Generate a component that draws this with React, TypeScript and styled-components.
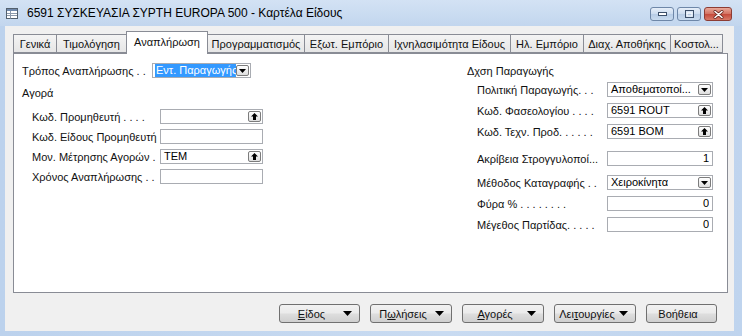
import React from "react";
import styled, { createGlobalStyle } from "styled-components";

const GlobalStyle = createGlobalStyle`
  html, body {
    margin: 0;
    padding: 0;
    background: #ffffff;
  }
  body {
    font-family: "Liberation Sans", Arial, sans-serif;
    font-size: 11px;
    color: #111;
  }
`;

const Window = styled.div`
  width: 742px;
  height: 336px;
  display: flex;
  flex-direction: column;
  background: linear-gradient(to right, #bcd2ed, #c9dbf1 60%, #bfd4ee);
  overflow: hidden;
`;

const TitleBar = styled.div`
  height: 26px;
  display: flex;
  align-items: center;
  padding: 0 10px 0 6px;
  background: linear-gradient(to bottom, #d3e2f4, #c2d6ee);
`;

const TitleText = styled.span`
  margin-left: 9px;
  font-size: 12px;
  color: #000;
  white-space: nowrap;
`;

const Controls = styled.div`
  margin-left: auto;
  display: flex;
  gap: 3px;
  align-self: flex-start;
  margin-top: 7px;
`;

const CtrlBtn = styled.div<{ $close?: boolean }>`
  width: ${(p) => (p.$close ? 28 : 24)}px;
  height: 14px;
  box-sizing: border-box;
  border: 1px solid ${(p) => (p.$close ? "#8d3c33" : "#6e87a8")};
  border-radius: 3px;
  background: ${(p) =>
    p.$close
      ? "linear-gradient(#e9a899, #d27161 50%, #c4493a 51%, #d87a68)"
      : "linear-gradient(#e6eef8, #ccdcef 50%, #b7cce6 51%, #c9dbef)"};
  display: flex;
  align-items: center;
  justify-content: center;
`;

const Client = styled.div`
  flex: 1;
  margin: 0 8px 5px 5px;
  background: #f0f0f0;
  display: flex;
  flex-direction: column;
  padding: 5px 6px 0 8px;
`;

const TabStrip = styled.div`
  display: flex;
  align-items: flex-end;
  height: 22px;
  position: relative;
  z-index: 1;
`;

const Tab = styled.div<{ $active?: boolean; $w: number }>`
  width: ${(p) => p.$w}px;
  height: ${(p) => (p.$active ? 23 : 19)}px;
  box-sizing: border-box;
  margin-left: -1px;
  margin-bottom: ${(p) => (p.$active ? -1 : 0)}px;
  border: 1px solid #898c95;
  border-bottom: ${(p) => (p.$active ? "none" : "1px solid #898c95")};
  background: ${(p) =>
    p.$active ? "#ffffff" : "linear-gradient(#f4f4f4, #e6e6e6)"};
  display: flex;
  align-items: center;
  justify-content: center;
  padding-bottom: ${(p) => (p.$active ? 3 : 0)}px;
  white-space: nowrap;
  overflow: hidden;
  &:first-child {
    margin-left: 0;
  }
`;

const Panel = styled.div`
  height: 240px;
  box-sizing: border-box;
  border: 1px solid #898c95;
  background: #ffffff;
  display: flex;
  justify-content: space-between;
  padding: 9px 14px 0 8px;
`;

const Column = styled.div<{ $w: number }>`
  width: ${(p) => p.$w}px;
  display: flex;
  flex-direction: column;
`;

const Heading = styled.div<{ $mt: number }>`
  height: 15px;
  line-height: 15px;
  margin-top: ${(p) => p.$mt}px;
`;

const Row = styled.div<{ $mt?: number; $indent?: number }>`
  display: flex;
  align-items: center;
  height: 15px;
  margin-top: ${(p) => p.$mt ?? 0}px;
  padding-left: ${(p) => p.$indent ?? 0}px;
`;

const Label = styled.div<{ $w: number }>`
  width: ${(p) => p.$w}px;
  flex: none;
  white-space: nowrap;
  overflow: hidden;
`;

const Field = styled.div<{ $w: number; $right?: boolean }>`
  width: ${(p) => p.$w}px;
  height: 15px;
  box-sizing: border-box;
  border: 1px solid #a9acb2;
  background: #fff;
  display: flex;
  align-items: center;
  justify-content: ${(p) => (p.$right ? "flex-end" : "flex-start")};
  padding: 0 ${(p) => (p.$right ? 3 : 1)}px 0 2px;
`;

const Value = styled.span<{ $selected?: boolean }>`
  flex: ${(p) => (p.$selected ? 1 : "none")};
  white-space: nowrap;
  overflow: hidden;
  line-height: 13px;
  height: 13px;
  padding-left: 1px;
  background: ${(p) => (p.$selected ? "#3399ff" : "transparent")};
  color: ${(p) => (p.$selected ? "#fff" : "#000")};
`;

const FieldBtn = styled.div`
  margin-left: auto;
  width: 13px;
  height: 11px;
  flex: none;
  box-sizing: border-box;
  border: 1px solid #7c7c7c;
  border-radius: 2px;
  background: linear-gradient(#ffffff, #dedede);
  display: flex;
  align-items: center;
  justify-content: center;
`;

const ButtonBar = styled.div`
  display: flex;
  justify-content: flex-end;
  gap: 10px;
  margin-top: 11px;
  padding-right: 11px;
`;

const CmdButton = styled.div<{ $w: number }>`
  width: ${(p) => p.$w}px;
  height: 19px;
  box-sizing: border-box;
  border: 1px solid #707070;
  border-radius: 3px;
  background: linear-gradient(#f2f2f2, #ebebeb 45%, #dddddd 55%, #cfcfcf);
  display: flex;
  align-items: center;
  padding-right: 7px;
`;

const CmdLabel = styled.span`
  flex: 1;
  text-align: center;
`;

const FormIcon = () => (
  <svg width="12" height="11" viewBox="0 0 12 11">
    <rect x="0.5" y="0.5" width="11" height="10" fill="#fff" stroke="#53606e" />
    <rect x="1" y="1" width="10" height="2" fill="#6f88ab" />
    <path d="M1 5.5h10M1 7.5h10M4.5 3v7.5" stroke="#8b99ab" strokeWidth="1" />
  </svg>
);

const MinGlyph = () => (
  <svg width="9" height="4" viewBox="0 0 9 4">
    <rect x="0.5" y="0.5" width="8" height="3" fill="#fff" stroke="#3c4f69" />
  </svg>
);

const MaxGlyph = () => (
  <svg width="9" height="8" viewBox="0 0 9 8">
    <rect x="0.5" y="0.5" width="8" height="7" fill="none" stroke="#3c4f69" />
    <rect x="2" y="3" width="5" height="3" fill="none" stroke="#fff" />
  </svg>
);

const CloseGlyph = () => (
  <svg width="11" height="9" viewBox="0 0 11 9">
    <path d="M2 1.5l7 6M9 1.5l-7 6" stroke="#6b2a22" strokeWidth="3" strokeLinecap="round" />
    <path d="M2 1.5l7 6M9 1.5l-7 6" stroke="#fff" strokeWidth="1.6" strokeLinecap="round" />
  </svg>
);

const DropGlyph = () => (
  <svg width="7" height="4" viewBox="0 0 7 4">
    <path d="M0 0h7L3.5 4z" fill="#000" />
  </svg>
);

const LookupGlyph = () => (
  <svg width="7" height="7" viewBox="0 0 7 7">
    <path d="M3.5 0L7 3.5H5V7H2V3.5H0z" fill="#000" />
  </svg>
);

const MenuArrow = () => (
  <svg width="9" height="5" viewBox="0 0 9 5">
    <path d="M0 0h9L4.5 5z" fill="#000" />
  </svg>
);

type Kind = "drop" | "lookup" | undefined;

const InputBox = ({
  w,
  value,
  kind,
  right,
  selected,
}: {
  w: number;
  value?: string;
  kind?: Kind;
  right?: boolean;
  selected?: boolean;
}) => (
  <Field $w={w} $right={right}>
    {value && <Value $selected={selected}>{value}</Value>}
    {kind && (
      <FieldBtn>{kind === "drop" ? <DropGlyph /> : <LookupGlyph />}</FieldBtn>
    )}
  </Field>
);

const tabs = [
  { t: "Γενικά", w: 44 },
  { t: "Τιμολόγηση", w: 71 },
  { t: "Αναπλήρωση", w: 82, active: true },
  { t: "Προγραμματισμός", w: 98 },
  { t: "Εξωτ. Εμπόριο", w: 85 },
  { t: "Ιχνηλασιμότητα Είδους", w: 123 },
  { t: "Ηλ. Εμπόριο", w: 74 },
  { t: "Διαχ. Αποθήκης", w: 88 },
  { t: "Κοστολ...", w: 53 },
];

const purchase: { label: string; value?: string; kind?: Kind }[] = [
  { label: "Κωδ. Προμηθευτή . . . .", kind: "lookup" },
  { label: "Κωδ. Είδους Προμηθευτή" },
  { label: "Μον. Μέτρησης Αγορών .", value: "TEM", kind: "lookup" },
  { label: "Χρόνος Αναπλήρωσης . ." },
];

const production: {
  label: string;
  value?: string;
  kind?: Kind;
  right?: boolean;
  mt: number;
}[] = [
  { label: "Πολιτική Παραγωγής. . .", value: "Αποθεματοποί...", kind: "drop", mt: 3 },
  { label: "Κωδ. Φασεολογίου . . . .", value: "6591 ROUT", kind: "lookup", mt: 6 },
  { label: "Κωδ. Τεχν. Προδ. . . . . .", value: "6591 BOM", kind: "lookup", mt: 6 },
  { label: "Ακρίβεια Στρογγυλοποί...", value: "1", right: true, mt: 12 },
  { label: "Μέθοδος Καταγραφής . .", value: "Χειροκίνητα", kind: "drop", mt: 9 },
  { label: "Φύρα %  . . . . . . . .", value: "0", right: true, mt: 6 },
  { label: "Μέγεθος Παρτίδας. . . . .", value: "0", right: true, mt: 6 },
];

export default function App() {
  return (
    <>
      <GlobalStyle />
      <Window>
        <TitleBar>
          <FormIcon />
          <TitleText>6591 ΣΥΣΚΕΥΑΣΙΑ ΣΥΡΤΗ EUROPA 500 - Καρτέλα Είδους</TitleText>
          <Controls>
            <CtrlBtn>
              <MinGlyph />
            </CtrlBtn>
            <CtrlBtn>
              <MaxGlyph />
            </CtrlBtn>
            <CtrlBtn $close>
              <CloseGlyph />
            </CtrlBtn>
          </Controls>
        </TitleBar>
        <Client>
          <TabStrip>
            {tabs.map((t) => (
              <Tab key={t.t} $w={t.w} $active={t.active}>
                {t.t}
              </Tab>
            ))}
          </TabStrip>
          <Panel>
            <Column $w={241}>
              <Row>
                <Label $w={130}>Τρόπος Αναπλήρωσης . .</Label>
                <InputBox w={99} value="Εντ. Παραγωγής" kind="drop" selected />
              </Row>
              <Heading $mt={8}>Αγορά</Heading>
              {purchase.map((r, i) => (
                <Row key={r.label} $indent={10} $mt={i === 0 ? 8 : 5}>
                  <Label $w={128}>{r.label}</Label>
                  <InputBox w={103} value={r.value} kind={r.kind} />
                </Row>
              ))}
            </Column>
            <Column $w={246}>
              <Heading $mt={1}>Δχση Παραγωγής</Heading>
              {production.map((r) => (
                <Row key={r.label} $indent={10} $mt={r.mt}>
                  <Label $w={130}>{r.label}</Label>
                  <InputBox w={106} value={r.value} kind={r.kind} right={r.right} />
                </Row>
              ))}
            </Column>
          </Panel>
          <ButtonBar>
            <CmdButton $w={81}>
              <CmdLabel>
                <u>Ε</u>ίδος
              </CmdLabel>
              <MenuArrow />
            </CmdButton>
            <CmdButton $w={82}>
              <CmdLabel>
                Π<u>ω</u>λήσεις
              </CmdLabel>
              <MenuArrow />
            </CmdButton>
            <CmdButton $w={82}>
              <CmdLabel>
                <u>Α</u>γορές
              </CmdLabel>
              <MenuArrow />
            </CmdButton>
            <CmdButton $w={82}>
              <CmdLabel>
                Λει<u>τ</u>ουργίες
              </CmdLabel>
              <MenuArrow />
            </CmdButton>
            <CmdButton $w={71}>
              <CmdLabel>Βοήθεια</CmdLabel>
            </CmdButton>
          </ButtonBar>
        </Client>
      </Window>
    </>
  );
}
